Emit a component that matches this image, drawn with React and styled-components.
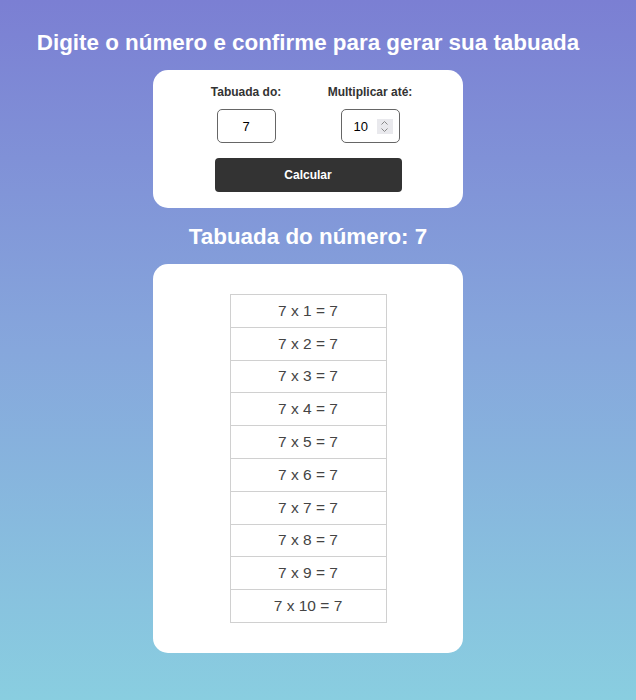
import React from "react";
import styled, { createGlobalStyle } from "styled-components";

const Global = createGlobalStyle`
  html, body { margin: 0; padding: 0; }
  body {
    font-family: "Liberation Sans", Arial, sans-serif;
    min-height: 700px;
    background: linear-gradient(to bottom, #7b7fd3 0%, #86a7dc 50%, #89cee0 100%);
  }
`;

const Page = styled.main`
  width: 616px;
  display: flex;
  flex-direction: column;
  align-items: center;
  padding: 30px 0 48px;
`;

const Title = styled.h1`
  margin: 0 0 14px;
  font-size: 22.4px;
  line-height: 26px;
  font-weight: 700;
  color: #fff;
  text-align: center;
`;

const Card = styled.section`
  width: 310px;
  box-sizing: border-box;
  background: #fff;
  border-radius: 15px;
  padding: ${(p) => p.$pad};
  display: flex;
  flex-direction: column;
  align-items: center;
`;

const Fields = styled.div`
  display: flex;
  gap: 34px;
  justify-content: center;
`;

const Field = styled.label`
  display: flex;
  flex-direction: column;
  align-items: center;
  gap: 10px;
  width: 90px;
`;

const LabelText = styled.span`
  font-size: 12px;
  line-height: 14px;
  font-weight: 700;
  color: #333;
  white-space: nowrap;
`;

const NumberInput = styled.div`
  width: 59px;
  height: 34px;
  box-sizing: border-box;
  border: 1px solid #666;
  border-radius: 5px;
  display: flex;
  align-items: center;
  justify-content: ${(p) => (p.$spin ? "space-between" : "center")};
  padding: ${(p) => (p.$spin ? "0 6px 0 12px" : "0")};
  font-size: 13px;
  color: #000;
`;

const Spinner = styled.span`
  width: 16px;
  height: 15px;
  background: #e9e9ed;
  display: flex;
  align-items: center;
  justify-content: center;
`;

const Button = styled.button`
  margin-top: 15px;
  width: 187px;
  height: 34px;
  border: none;
  border-radius: 4px;
  background: #333;
  color: #fff;
  font-family: inherit;
  font-size: 12px;
  font-weight: 700;
`;

const SubTitle = styled.h2`
  margin: 16px 0 14px;
  font-size: 22.4px;
  line-height: 26px;
  font-weight: 700;
  color: #fff;
  text-align: center;
`;

const Table = styled.table`
  border-collapse: collapse;
  width: 157px;
`;

const Cell = styled.td`
  border: 1px solid #d0d0d0;
  height: 31.8px;
  padding: 0;
  text-align: center;
  font-size: 15.5px;
  color: #444;
`;

export default function App() {
  const num = 7;
  const rows = Array.from({ length: 10 }, (_, i) => i + 1);
  return (
    <>
      <Global />
      <Page>
        <Title>Digite o número e confirme para gerar sua tabuada</Title>
        <Card $pad="15px 0 16px">
          <Fields>
            <Field>
              <LabelText>Tabuada do:</LabelText>
              <NumberInput>7</NumberInput>
            </Field>
            <Field>
              <LabelText>Multiplicar até:</LabelText>
              <NumberInput $spin>
                <span>10</span>
                <Spinner>
                  <svg width="9" height="13" viewBox="0 0 9 13" fill="none" stroke="#888" strokeWidth="1">
                    <path d="M1.5 4.5 L4.5 1.5 L7.5 4.5" />
                    <path d="M1.5 8.5 L4.5 11.5 L7.5 8.5" />
                  </svg>
                </Spinner>
              </NumberInput>
            </Field>
          </Fields>
          <Button>Calcular</Button>
        </Card>
        <SubTitle>Tabuada do número: {num}</SubTitle>
        <Card $pad="30px 0 30px">
          <Table>
            <tbody>
              {rows.map((r) => (
                <tr key={r}>
                  <Cell>{num} x {r} = {num}</Cell>
                </tr>
              ))}
            </tbody>
          </Table>
        </Card>
      </Page>
    </>
  );
}
